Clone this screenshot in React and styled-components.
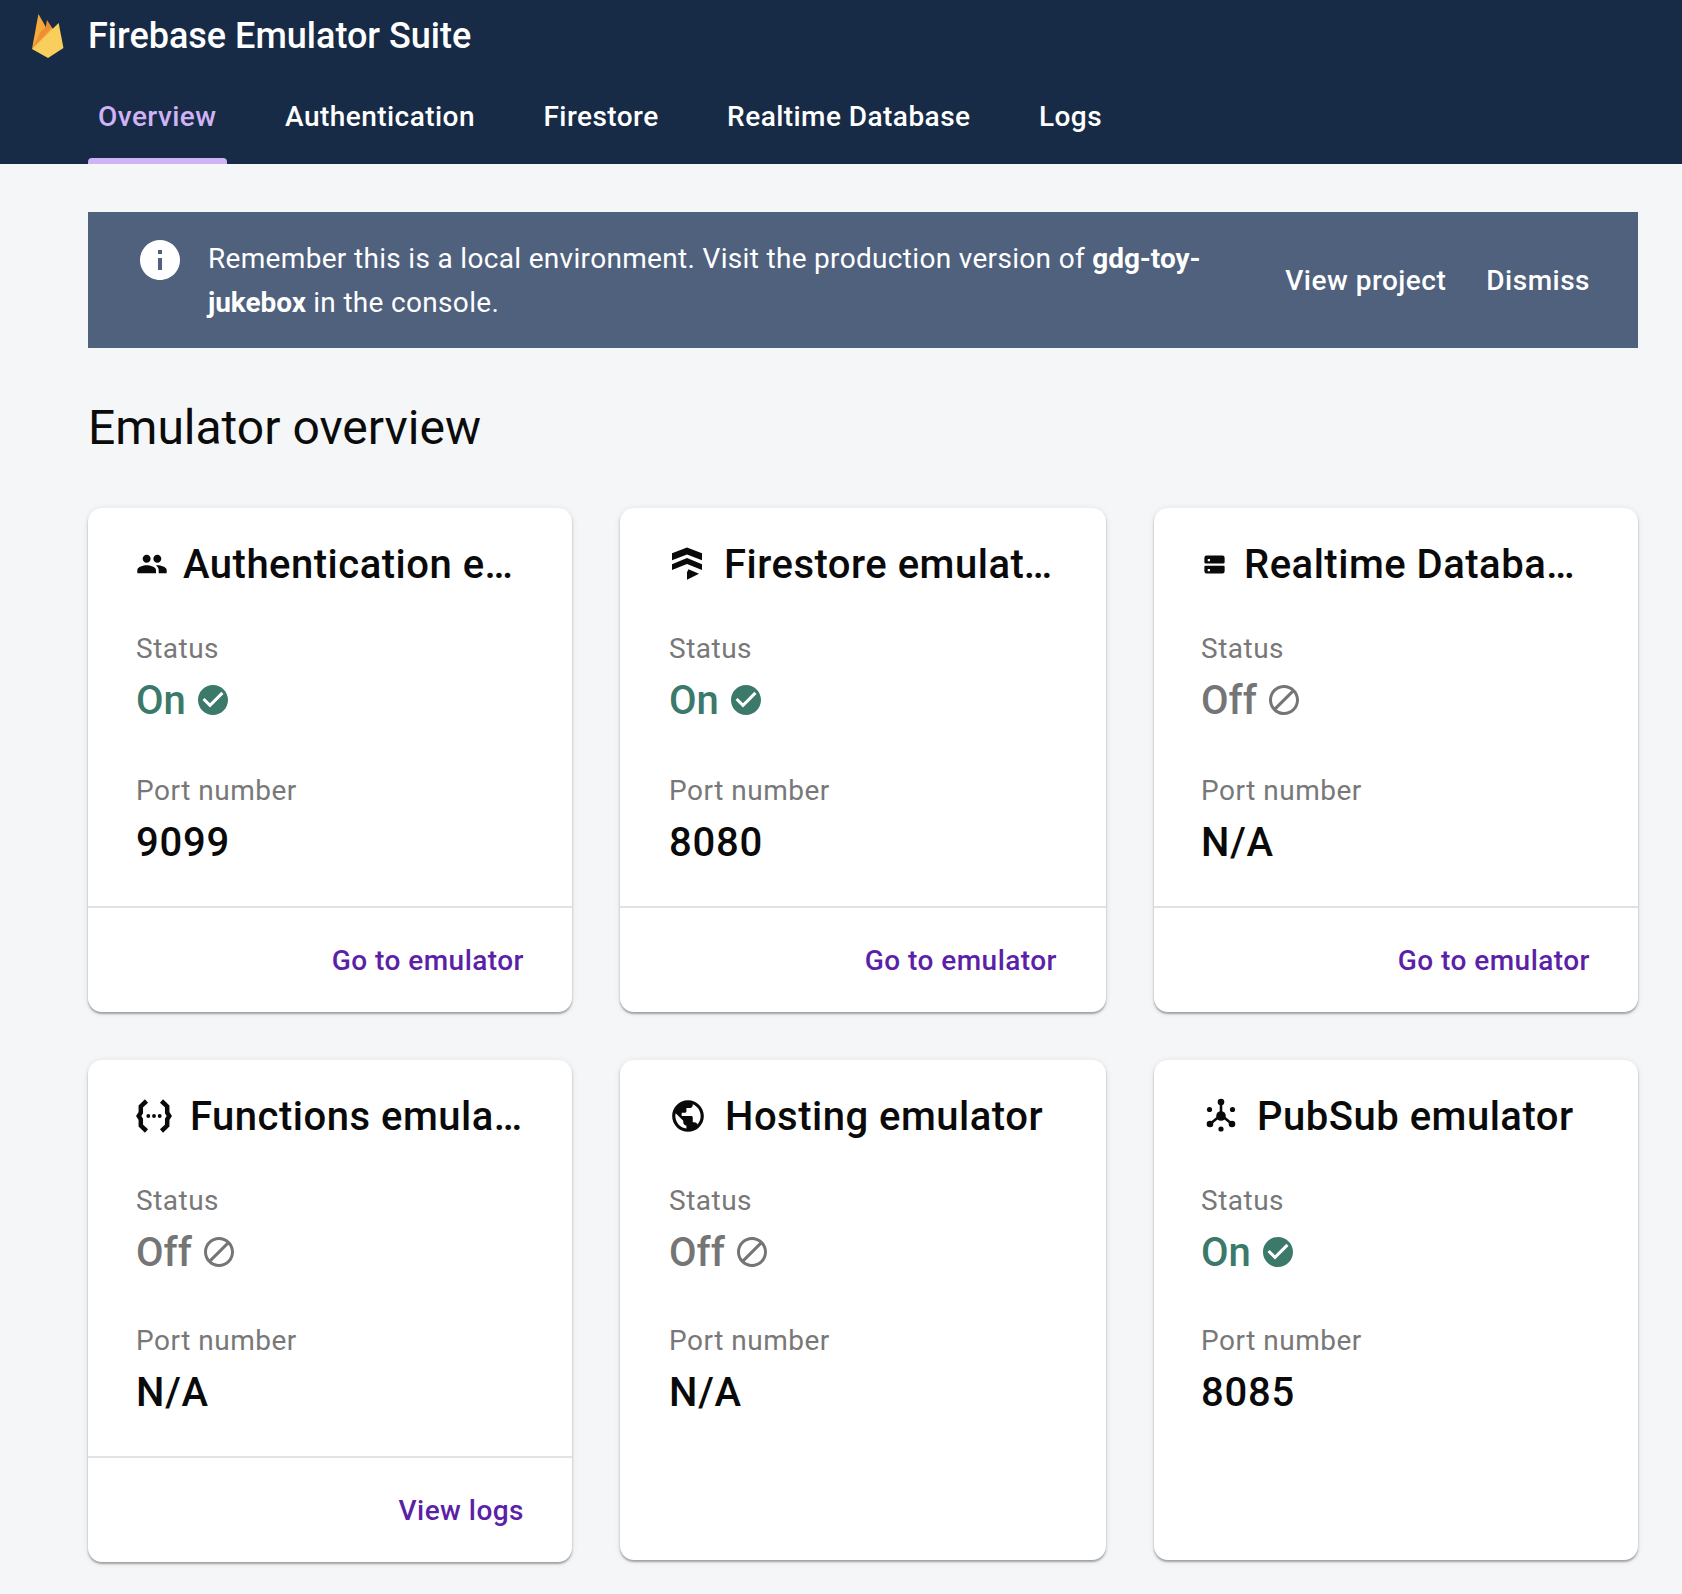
import React from "react";
import styled, { createGlobalStyle } from "styled-components";

const GlobalStyle = createGlobalStyle`
  html, body {
    margin: 0;
    padding: 0;
    background: #f5f6f8;
    font-family: Roboto, "Liberation Sans", sans-serif;
    -webkit-font-smoothing: antialiased;
  }
`;

const PATHS = {
  people:
    "M16 11c1.66 0 2.99-1.34 2.99-3S17.66 5 16 5c-1.66 0-3 1.34-3 3s1.34 3 3 3zm-8 0c1.66 0 2.99-1.34 2.99-3S9.66 5 8 5C6.34 5 5 6.34 5 8s1.34 3 3 3zm0 2c-2.33 0-7 1.17-7 3.5V19h14v-2.5c0-2.33-4.67-3.5-7-3.5zm8 0c-.29 0-.62.02-.97.05 1.16.84 1.97 1.97 1.97 3.45V19h6v-2.5c0-2.33-4.67-3.5-7-3.5z",
  globe:
    "M12 2C6.48 2 2 6.48 2 12s4.48 10 10 10 10-4.48 10-10S17.52 2 12 2zm-1 17.93c-3.95-.49-7-3.85-7-7.93 0-.62.08-1.21.21-1.79L9 15v1c0 1.1.9 2 2 2v1.93zm6.9-2.54c-.26-.81-1-1.39-1.9-1.39h-1v-3c0-.55-.45-1-1-1H8v-2h2c.55 0 1-.45 1-1V7h2c1.1 0 2-.9 2-2v-.41c2.93 1.19 5 4.06 5 7.41 0 2.08-.8 3.97-2.1 5.39z",
  check:
    "M12 2C6.48 2 2 6.48 2 12s4.48 10 10 10 10-4.48 10-10S17.52 2 12 2zm-2 15l-5-5 1.41-1.41L10 14.17l7.59-7.59L19 8l-9 9z",
  block:
    "M12 2C6.48 2 2 6.48 2 12s4.48 10 10 10 10-4.48 10-10S17.52 2 12 2zM4 12c0-4.42 3.58-8 8-8 1.85 0 3.55.63 4.9 1.69L5.69 16.9C4.63 15.55 4 13.85 4 12zm8 8c-1.85 0-3.55-.63-4.9-1.69L18.31 7.1C19.37 8.45 20 10.15 20 12c0 4.42-3.58 8-8 8z",
  info:
    "M12 2C6.48 2 2 6.48 2 12s4.48 10 10 10 10-4.48 10-10S17.52 2 12 2zm1 15h-2v-6h2v6zm0-8h-2V7h2v2z",
  firestore:
    "M12 1l10 3.8v4.7L12 5.6 2 9.500V4.800L12 1zM12 8l10 4.200V16l-10-4-10 4v-3.800L12 8zM13 15.500l7 3-8 4v-5l1-2z",
  database:
    "M5 4h14a2 2 0 0 1 2 2v4a1 1 0 0 1-1 1H4a1 1 0 0 1-1-1V6a2 2 0 0 1 2-2zm1 3v2h2V7H6zM4 13h16a1 1 0 0 1 1 1v4a2 2 0 0 1-2 2H5a2 2 0 0 1-2-2v-4a1 1 0 0 1 1-1zm2 3v2h2v-2H6z",
};

const IconSvg = styled.svg`
  flex-shrink: 0;
`;

const Icon = ({ name, size }) => (
  <IconSvg width={size} height={size} viewBox="0 0 24 24" fill="currentColor">
    <path d={PATHS[name]} fillRule="evenodd" />
  </IconSvg>
);

const FunctionsIcon = ({ size }) => (
  <IconSvg width={size} height={size} viewBox="0 0 24 24">
    <path
      d="M7 2 3.200 5.600v4.200L1.800 12l1.400 2.200v4.200L7 22M17 2l3.800 3.600v4.200l1.400 2.200-1.400 2.200v4.200L17 22"
      fill="none"
      stroke="currentColor"
      strokeWidth="3"
    />
    <circle cx="8.200" cy="12" r="1.300" fill="currentColor" />
    <circle cx="12" cy="12" r="1.300" fill="currentColor" />
    <circle cx="15.800" cy="12" r="1.300" fill="currentColor" />
  </IconSvg>
);

const PubSubIcon = () => (
  <IconSvg width="40" height="40" viewBox="0 0 40 40" fill="currentColor">
    <path d="M20 6v13M20 19 9 28M20 19l11 9" stroke="currentColor" strokeWidth="2.600" />
    <circle cx="20" cy="6" r="3.300" />
    <circle cx="20" cy="20" r="4.800" />
    <circle cx="9" cy="28" r="3.300" />
    <circle cx="31" cy="28" r="3.300" />
    <circle cx="8.500" cy="13.500" r="2.600" />
    <circle cx="31.500" cy="13.500" r="2.600" />
    <circle cx="20" cy="33" r="2.600" />
  </IconSvg>
);

const FirebaseLogo = () => (
  <IconSvg width="32" height="46" viewBox="0 0 30 46" preserveAspectRatio="none">
    <path d="M0 36 6 1l7 13-7 14z" fill="#f6a93c" />
    <path d="M0 36 8 19l5-5 1-7 5 8-3 9z" fill="#ee8f33" />
    <path d="M0 36 14 20l4-5 3 1-3 8z" fill="#f4a93c" />
    <path d="M0 36 25 10l4.500 25L15 45z" fill="#f8cf5c" />
  </IconSvg>
);

const Header = styled.header`
  background: #172b47;
  height: 164px;
  color: #fff;
  display: flex;
  flex-direction: column;
`;

const TitleRow = styled.div`
  display: flex;
  align-items: center;
  height: 72px;
  padding-left: 32px;
  gap: 24px;
`;

const AppTitle = styled.h1`
  margin: 0;
  font-size: 36px;
  font-weight: 500;
`;

const TabBar = styled.nav`
  display: flex;
  padding-left: 88px;
  height: 92px;
`;

const Tab = styled.a`
  position: relative;
  display: flex;
  align-items: flex-start;
  padding: 28px 10px 0;
  margin-right: 48.5px;
  font-size: 28px;
  font-weight: 500;
  letter-spacing: 0.45px;
  color: ${(p) => (p.$active ? "#cfb3f4" : "#fff")};

  ${(p) =>
    p.$active &&
    `&::after {
      content: "";
      position: absolute;
      left: 0;
      right: 0;
      bottom: 0;
      height: 6px;
      border-radius: 4px 4px 0 0;
      background: #cfb3f4;
    }`}
`;

const Main = styled.main`
  padding: 48px 44px 28px 88px;
`;

const Banner = styled.section`
  display: flex;
  align-items: center;
  background: #4f617d;
  color: #fff;
  height: 136px;
  box-sizing: border-box;
  padding-left: 48px;
  padding-right: 48px;
`;

const BannerIcon = styled.span`
  display: flex;
  align-self: flex-start;
  margin-top: 24px;
  margin-right: 24px;
`;

const BannerText = styled.p`
  margin: 0;
  padding-top: 2px;
  width: 1010px;
  font-size: 28px;
  line-height: 44px;
  letter-spacing: 0.32px;
  b {
    font-weight: 700;
    letter-spacing: -0.05px;
  }
`;

const BannerActions = styled.div`
  display: flex;
  gap: 40px;
  margin-left: auto;
  font-size: 28px;
  font-weight: 500;
  letter-spacing: 0.5px;
`;

const Heading = styled.h2`
  margin: 52px 0 52px;
  font-size: 48px;
  line-height: 56px;
  font-weight: 400;
  color: #0b0b0b;
`;

const Grid = styled.div`
  display: grid;
  grid-template-columns: 484px 486px 484px;
  column-gap: 48px;
  row-gap: 48px;
  align-items: start;
`;

const Card = styled.article`
  background: #fff;
  border-radius: 14px;
  box-shadow: 0 2px 2px rgba(0, 0, 0, 0.3), 0 1px 6px rgba(0, 0, 0, 0.1);
  height: ${(p) => p.$height}px;
  display: flex;
  flex-direction: column;
  overflow: hidden;
`;

const CardBody = styled.div`
  padding: 33px 48px 0 ${(p) => p.$inset}px;
  flex: 1;
`;

const CardTitle = styled.div`
  display: flex;
  align-items: center;
  gap: ${(p) => p.$gap}px;
  height: 46px;
  color: #0a0a0a;
`;

const TitleText = styled.h3`
  margin: 0;
  min-width: 0;
  font-size: 40px;
  font-weight: 500;
  letter-spacing: 0.5px;
  white-space: nowrap;
  overflow: hidden;
  text-overflow: ellipsis;
`;

const Label = styled.div`
  font-size: 28px;
  line-height: 36px;
  letter-spacing: 0.5px;
  color: #787878;
  margin-top: ${(p) => p.$top}px;
`;

const StatusValue = styled.div`
  display: flex;
  align-items: center;
  gap: 9px;
  margin-top: 11px;
  height: 44px;
  font-size: 40px;
  font-weight: 500;
  color: ${(p) => (p.$on ? "#3b7a6a" : "#757575")};
`;

const PortValue = styled.div`
  margin-top: 12px;
  height: 44px;
  line-height: 44px;
  font-size: 40px;
  font-weight: 500;
  letter-spacing: 0.8px;
  color: #0a0a0a;
`;

const CardFooter = styled.div`
  border-top: 2px solid #e2e2e2;
  height: 106px;
  box-sizing: border-box;
  display: flex;
  align-items: center;
  justify-content: flex-end;
  padding-right: ${(p) => p.$inset}px;
`;

const FooterLink = styled.a`
  font-size: 28px;
  font-weight: 500;
  letter-spacing: 0.47px;
  color: #5b1fa8;
`;

const EMULATORS = [
  { title: "Authentication emulator", icon: <Icon name="people" size={32} />, gap: 15, inset: 48, portTop: 51, on: true, port: "9099", link: "Go to emulator", height: 504 },
  { title: "Firestore emulator", icon: <Icon name="firestore" size={36} />, gap: 19, inset: 49, portTop: 51, on: true, port: "8080", link: "Go to emulator", height: 504 },
  { title: "Realtime Database emulator", icon: <Icon name="database" size={27} />, gap: 16, inset: 47, portTop: 51, on: false, port: "N/A", link: "Go to emulator", height: 504 },
  { title: "Functions emulator", icon: <FunctionsIcon size={36} />, gap: 18, inset: 48, portTop: 49, on: false, port: "N/A", link: "View logs", height: 502 },
  { title: "Hosting emulator", icon: <Icon name="globe" size={38} />, gap: 18, inset: 49, portTop: 49, on: false, port: "N/A", height: 500 },
  { title: "PubSub emulator", icon: <PubSubIcon />, gap: 16, inset: 47, portTop: 49, on: true, port: "8085", height: 500 },
];

const TABS = ["Overview", "Authentication", "Firestore", "Realtime Database", "Logs"];

export default function App() {
  return (
    <>
      <GlobalStyle />
      <Header>
        <TitleRow>
          <FirebaseLogo />
          <AppTitle>Firebase Emulator Suite</AppTitle>
        </TitleRow>
        <TabBar>
          {TABS.map((t, i) => (
            <Tab key={t} $active={i === 0}>
              {t}
            </Tab>
          ))}
        </TabBar>
      </Header>
      <Main>
        <Banner>
          <BannerIcon>
            <Icon name="info" size={48} />
          </BannerIcon>
          <BannerText>
            Remember this is a local environment. Visit the production version of <b>gdg-toy-jukebox</b> in the console.
          </BannerText>
          <BannerActions>
            <span>View project</span>
            <span>Dismiss</span>
          </BannerActions>
        </Banner>
        <Heading>Emulator overview</Heading>
        <Grid>
          {EMULATORS.map((e) => (
            <Card key={e.title} $height={e.height}>
              <CardBody $inset={e.inset}>
                <CardTitle $gap={e.gap}>
                  {e.icon}
                  <TitleText>{e.title}</TitleText>
                </CardTitle>
                <Label $top={44}>Status</Label>
                <StatusValue $on={e.on}>
                  {e.on ? "On" : "Off"}
                  <Icon name={e.on ? "check" : "block"} size={36} />
                </StatusValue>
                <Label $top={e.portTop}>Port number</Label>
                <PortValue>{e.port}</PortValue>
              </CardBody>
              {e.link && (
                <CardFooter $inset={e.inset === 49 ? 49 : 48}>
                  <FooterLink>{e.link}</FooterLink>
                </CardFooter>
              )}
            </Card>
          ))}
        </Grid>
      </Main>
    </>
  );
}
